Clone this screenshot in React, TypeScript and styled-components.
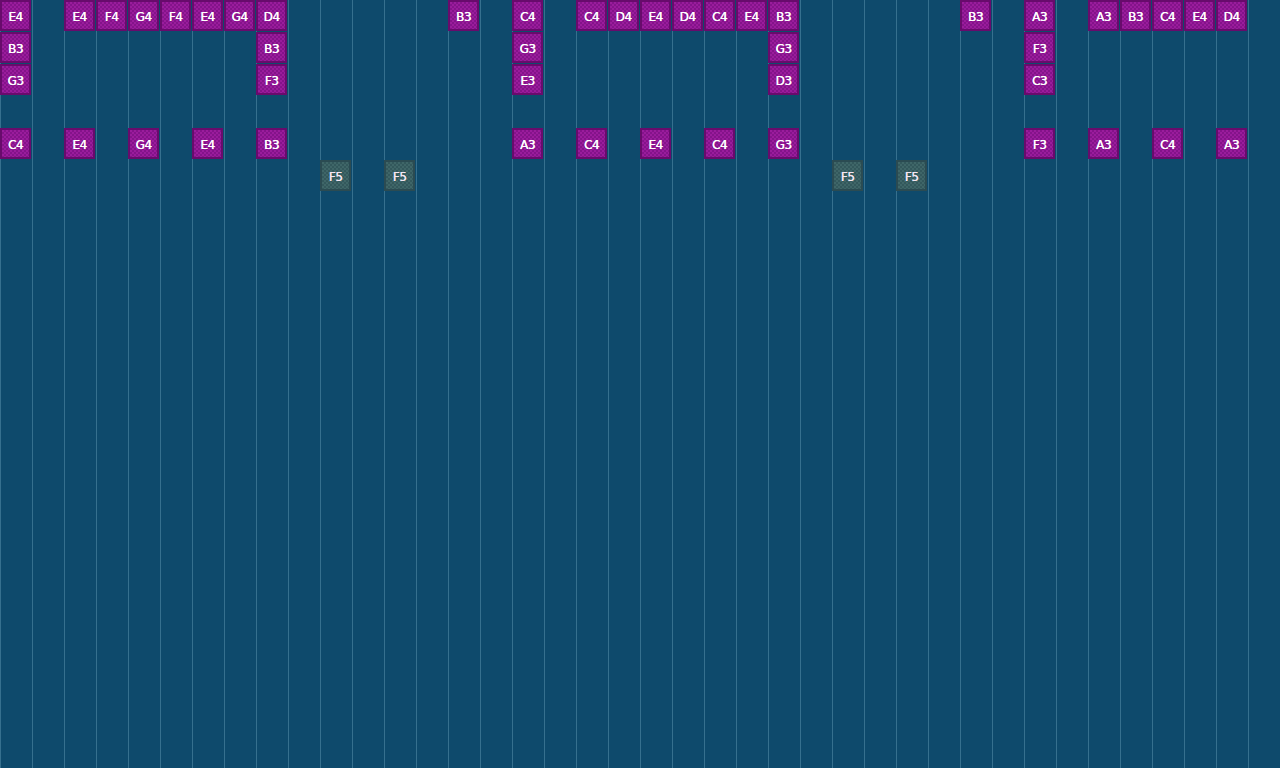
import styled, { createGlobalStyle, css } from 'styled-components';

type Kind = 'chord' | 'lead';

interface Note {
  pitch: string;
  col: number;
  row: number;
  kind?: Kind;
}

const COLS = 40;
const CELL = 32;

// step columns are 32px wide; rows are note slots within a step
const notes: Note[] = [
  // top voice
  ...[
    ['E4', 0], ['E4', 2], ['F4', 3], ['G4', 4], ['F4', 5], ['E4', 6], ['G4', 7], ['D4', 8],
    ['B3', 14], ['C4', 16], ['C4', 18], ['D4', 19], ['E4', 20], ['D4', 21], ['C4', 22],
    ['E4', 23], ['B3', 24], ['B3', 30], ['A3', 32], ['A3', 34], ['B3', 35], ['C4', 36],
    ['E4', 37], ['D4', 38],
  ].map(([pitch, col]) => ({ pitch: pitch as string, col: col as number, row: 0 })),
  // chord tones
  ...[
    ['B3', 0, 1], ['G3', 0, 2], ['B3', 8, 1], ['F3', 8, 2], ['G3', 16, 1], ['E3', 16, 2],
    ['G3', 24, 1], ['D3', 24, 2], ['F3', 32, 1], ['C3', 32, 2],
  ].map(([pitch, col, row]) => ({ pitch: pitch as string, col: col as number, row: row as number })),
  // bass line
  ...[
    ['C4', 0], ['E4', 2], ['G4', 4], ['E4', 6], ['B3', 8], ['A3', 16], ['C4', 18], ['E4', 20],
    ['C4', 22], ['G3', 24], ['F3', 32], ['A3', 34], ['C4', 36], ['A3', 38],
  ].map(([pitch, col]) => ({ pitch: pitch as string, col: col as number, row: 4 })),
  // muted high notes
  ...[10, 12, 26, 28].map((col) => ({ pitch: 'F5', col, row: 5, kind: 'lead' as Kind })),
];

const GlobalStyle = createGlobalStyle`
  html, body {
    margin: 0;
    padding: 0;
    background: #0e4a6c;
    overflow: hidden;
  }
`;

const Roll = styled.div`
  width: ${COLS * CELL}px;
  height: 768px;
  display: grid;
  grid-template-columns: repeat(${COLS}, ${CELL}px);
  grid-auto-rows: ${CELL}px;
  background-color: #0e4a6c;
  background-image: repeating-linear-gradient(
    to right,
    #36708e 0,
    #36708e 1px,
    transparent 1px,
    transparent ${CELL}px
  );
`;

const palette = {
  chord: { body: '#9a1c9c', check: '#84138a', edge: '#680b6c', text: '#ffffff' },
  lead: { body: '#3f6668', check: '#33585c', edge: '#2b4b52', text: '#f4e6f2' },
};

const Cell = styled.div<{ $kind: Kind }>`
  box-sizing: border-box;
  width: 31px;
  height: 31px;
  display: flex;
  align-items: center;
  justify-content: center;
  padding-top: 2px;
  font-family: 'DejaVu Sans', 'Liberation Sans', sans-serif;
  font-size: 12px;
  letter-spacing: -0.4px;
  ${({ $kind }) => {
    const p = palette[$kind];
    return css`
      color: ${p.text};
      text-shadow: 0.4px 0 0 ${p.text};
      border: 2px solid ${p.edge};
      background-color: ${p.body};
      background-image: conic-gradient(
        ${p.check} 25%,
        transparent 0 50%,
        ${p.check} 0 75%,
        transparent 0
      );
      background-size: 4px 4px;
    `;
  }}
`;

const Label = styled.span`
  line-height: 12px;
`;

export default function App() {
  return (
    <>
      <GlobalStyle />
      <Roll>
        {notes.map((n, i) => (
          <Cell
            key={i}
            $kind={n.kind ?? 'chord'}
            style={{ gridColumn: n.col + 1, gridRow: n.row + 1 }}
          >
            <Label>{n.pitch}</Label>
          </Cell>
        ))}
      </Roll>
    </>
  );
}
